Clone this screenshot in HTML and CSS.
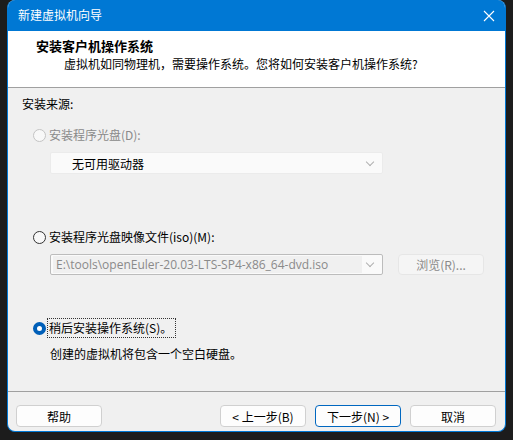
FILE: index.html
```html
<!DOCTYPE html>
<html lang="zh-CN">
<head>
  <meta charset="UTF-8">
  <title>新建虚拟机向导</title>
  <link rel="stylesheet" href="styles.css">
</head>
<body>
<div class="window">
  <div class="titlebar">
    <span class="title">新建虚拟机向导</span>
    <svg class="close" width="12" height="12" viewBox="0 0 12 12">
      <path d="M1 1 L11 11 M11 1 L1 11" stroke="#fff" stroke-width="1.1" fill="none"/>
    </svg>
  </div>
  <div class="head">
    <h1>安装客户机操作系统</h1>
    <p>虚拟机如同物理机，需要操作系统。您将如何安装客户机操作系统?</p>
  </div>
  <div class="content">
    <div class="group-label">安装来源:</div>

    <label class="option disabled">
      <span class="radio"></span>安装程序光盘(D):
    </label>
    <div class="row">
      <div class="combo">
        <span class="combo-text">无可用驱动器</span>
        <span class="chev"></span>
      </div>
    </div>

    <label class="option opt-iso">
      <span class="radio"></span>安装程序光盘映像文件(iso)(M):
    </label>
    <div class="row">
      <div class="combo bordered">
        <span class="combo-text path">E:\tools\openEuler-20.03-LTS-SP4-x86_64-dvd.iso</span>
        <span class="chev"></span>
      </div>
      <button class="btn browse">浏览(R)...</button>
    </div>

    <label class="option opt-later">
      <span class="radio checked"></span><span class="focus">稍后安装操作系统(S)。</span>
    </label>
    <div class="note">创建的虚拟机将包含一个空白硬盘。</div>
  </div>
  <div class="footer">
    <button class="btn">帮助</button>
    <div class="spacer"></div>
    <button class="btn">&lt; 上一步(B)</button>
    <button class="btn primary">下一步(N) &gt;</button>
    <button class="btn">取消</button>
  </div>
</div>
</body>
</html>
```

FILE: styles.css
```css
body {
  margin: 0;
  background: #1c1c1c;
  font-family: "Noto Sans CJK SC", "Noto Sans", sans-serif;
  font-size: 12px;
  color: #000;
}
.window {
  margin-left: 7px;
  width: 497px;
  height: 431px;
  border: 1px solid #0078d4;
  border-top: none;
  border-radius: 8px;
  overflow: hidden;
  background: #f0f0f0;
  display: flex;
  flex-direction: column;
}
.titlebar {
  height: 31px;
  background: #0078d4;
  color: #fff;
  display: flex;
  align-items: center;
  padding: 0 10px 0 10px;
}
.title {
  flex: 1;
  font-size: 12px;
  line-height: 16px;
  margin-top: -1px;
}
.head {
  background: #fff;
  border-bottom: 1px solid #a0a0a0;
  box-sizing: border-box;
  height: 57px;
  padding-top: 7px;
}
.head h1 {
  margin: 0 0 0 28px;
  font-size: 13px;
  font-weight: bold;
  line-height: 16px;
}
.head p {
  margin: 2px 0 0 56px;
  line-height: 16px;
}
.content {
  flex: 1;
  padding: 8px 0 0 14px;
  border-bottom: 1px solid #a0a0a0;
}
.group-label {
  line-height: 16px;
}
.option {
  display: flex;
  align-items: center;
  margin: 15px 0 0 11px;
  line-height: 16px;
}
.option.disabled {
  color: #8a8a8a;
}
.opt-iso {
  margin-top: 55px;
}
.opt-later {
  margin-top: 45px;
}
.radio {
  width: 11px;
  height: 11px;
  border: 1px solid #333;
  border-radius: 50%;
  margin-right: 3px;
  box-sizing: content-box;
  background: #f8f8f8;
}
.disabled .radio {
  border-color: #c4c4c4;
}
.radio.checked {
  width: 5px;
  height: 5px;
  border: 4px solid #005fb8;
  background: #fff;
}
.focus {
  outline: 1px dotted #333;
  outline-offset: 1px;
  padding-right: 2px;
}
.row {
  display: flex;
  align-items: center;
  margin: 9px 0 0 28px;
}
.combo {
  width: 331px;
  height: 20px;
  background: #fafafa;
  border: 1px solid #ebebeb;
  border-radius: 2px;
  display: flex;
  align-items: center;
}
.combo .combo-text {
  flex: 1;
  padding-left: 21px;
}
.combo.bordered {
  border-color: #bcbcbc;
  height: 19px;
}
.combo .path {
  margin: 0 5px 0 2px;
  padding-left: 3px;
  background: #f0f0f0;
  color: #8a8a8a;
  font-family: "Open Sans", "Noto Sans", sans-serif;
  font-size: 12px;
  line-height: 17px;
  white-space: nowrap;
}
.chev {
  width: 5px;
  height: 5px;
  border-right: 1px solid #b0b0b0;
  border-bottom: 1px solid #b0b0b0;
  transform: rotate(45deg);
  margin: -3px 9px 0 0;
}
.btn {
  width: 86px;
  height: 22px;
  border: 1px solid #d0d0d0;
  border-radius: 4px;
  background: #fdfdfd;
  font-family: inherit;
  font-size: 12px;
  color: #000;
  padding: 0;
}
.browse {
  margin-left: 15px;
  height: 21px;
  color: #8a8a8a;
  background: #f5f5f5;
  border-color: #e6e6e6;
}
.note {
  margin: 10px 0 0 28px;
  line-height: 16px;
}
.footer {
  display: flex;
  align-items: center;
  gap: 9px;
  padding: 9px 9px 0 8px;
  height: 39px;
  box-sizing: border-box;
}
.footer .spacer {
  flex: 1;
}
.btn.primary {
  border-color: #0067c0;
}
```
